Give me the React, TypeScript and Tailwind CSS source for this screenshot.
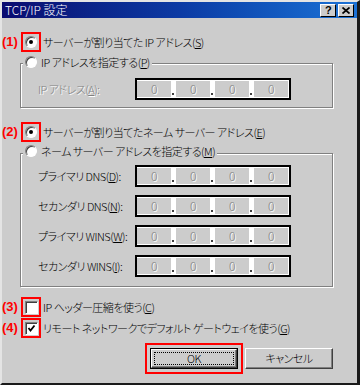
import React from 'react';

const JP = "font-['Noto_Sans_CJK_JP','Noto_Sans',sans-serif] [font-feature-settings:'palt'] font-light";
const TAG = "font-['Liberation_Sans',Arial,sans-serif] font-bold text-[13px] text-[#ff0000] leading-none tracking-normal";
const DISABLED = 'text-[#808080] [text-shadow:1px_1px_0_#ffffff]';

// accelerator key, underlined
const Acc: React.FC<{ k: string }> = ({ k }) => (
  <>
    (<span className="underline underline-offset-[1px]">{k}</span>)
  </>
);

const Radio: React.FC<{ checked?: boolean }> = ({ checked }) => (
  <span className="relative inline-block shrink-0 w-[12px] h-[12px] rounded-full bg-white border border-[#808080] border-b-white border-r-white shadow-[inset_1px_1px_0_#404040]">
    {checked && <span className="absolute left-[3px] top-[3px] w-[4px] h-[4px] rounded-full bg-black" />}
  </span>
);

const Checkbox: React.FC<{ checked?: boolean }> = ({ checked }) => (
  <span className="flex items-center justify-center shrink-0 w-[13px] h-[13px] bg-white border border-[#808080] border-b-white border-r-white shadow-[inset_1px_1px_0_#404040]">
    {checked && (
      <svg width="9" height="9" viewBox="0 0 9 9">
        <path d="M1.5 4 L3.5 6.5 L7.5 1.5" fill="none" stroke="#000" strokeWidth="1.8" />
      </svg>
    )}
  </span>
);

// numbered red annotation box around a control
const Marked: React.FC<{ n: number; children: React.ReactNode }> = ({ n, children }) => (
  <>
    <span className={`${TAG} w-[19px] -mt-[2px]`}>({n})</span>
    <span className="flex items-center justify-center w-[20px] h-[20px] border-2 border-[#ff0000]">{children}</span>
  </>
);

const IPBox: React.FC = () => (
  <div className="flex items-stretch w-[156px] h-[22px] border-2 border-black bg-white py-[1px] pr-[1px]">
    {[0, 1, 2, 3].map(i => (
      <React.Fragment key={i}>
        {i > 0 && (
          <div className="relative w-[5px]">
            <span className="absolute left-[1px] bottom-[2px] w-[2px] h-[2px] bg-[#404040]" />
          </div>
        )}
        <div className={`flex items-center justify-center w-[34px] bg-[#cccccc] text-[12px] leading-none ${DISABLED}`}>0</div>
      </React.Fragment>
    ))}
  </div>
);

const FieldRow: React.FC<{ label: React.ReactNode; disabled?: boolean }> = ({ label, disabled }) => (
  <div className="flex items-center h-[22px]">
    <span className={`w-[114px] pl-[17px] whitespace-nowrap ${disabled ? DISABLED : ''}`}>{label}</span>
    <IPBox />
  </div>
);

const GROUP = 'relative ml-[18px] w-[313px] border border-[#808080] shadow-[inset_1px_1px_0_#ffffff,1px_1px_0_#ffffff]';

export default function App() {
  return (
    <div className={`${JP} w-[360px] h-[385px] flex flex-col bg-[#cccccc] text-[11px] tracking-[-0.5px] leading-none text-black border-t-2 border-l-2 border-[#e4e4e4] border-r-[3px] border-r-[#1a1a1a] border-b-2 border-b-[#1a1a1a] overflow-hidden`}>
      {/* Title bar */}
      <div className="flex items-center h-[16px] pl-[3px] pr-[3px] bg-linear-to-r from-[#0a0a70] via-[#0c3aa4] to-[#1c72d6]">
        <span className="flex-1 text-white text-[12px] tracking-normal">TCP/IP 設定</span>
        <div className="flex gap-[2px]">
          <span className="flex items-center justify-center w-[16px] h-[13px] bg-[#cccccc] border border-white border-r-black border-b-black font-['Liberation_Sans',sans-serif] font-bold text-[11px] text-black">?</span>
          <span className="flex items-center justify-center w-[16px] h-[13px] bg-[#cccccc] border border-white border-r-black border-b-black">
            <svg width="8" height="7" viewBox="0 0 8 7">
              <path d="M0.5 0.5 L7.5 6.5 M7.5 0.5 L0.5 6.5" stroke="#000" strokeWidth="1.7" />
            </svg>
          </span>
        </div>
      </div>

      {/* (1) */}
      <div className="flex items-center h-[20px] mt-[14px]">
        <Marked n={1}><Radio checked /></Marked>
        <span className="ml-[2px] whitespace-nowrap">サーバーが割り当てた IP アドレス<Acc k="S" /></span>
      </div>

      <div className={`${GROUP} mt-[11px] h-[45px]`}>
        <div className="absolute -top-[9px] left-[2px] flex items-center gap-[4px] h-[14px] px-[2px] bg-[#cccccc]">
          <Radio />
          <span className="whitespace-nowrap">IP アドレスを指定する<Acc k="P" /></span>
        </div>
        <div className="mt-[14px]">
          <FieldRow disabled label={<>IP アドレス<Acc k="A" />:</>} />
        </div>
      </div>

      {/* (2) */}
      <div className="flex items-center h-[20px] mt-[14px]">
        <Marked n={2}><Radio checked /></Marked>
        <span className="ml-[2px] whitespace-nowrap">サーバーが割り当てたネーム サーバー アドレス<Acc k="E" /></span>
      </div>

      <div className={`${GROUP} mt-[11px] h-[134px]`}>
        <div className="absolute -top-[10px] left-[2px] flex items-center gap-[4px] h-[14px] px-[2px] bg-[#cccccc]">
          <Radio />
          <span className="whitespace-nowrap">ネーム サーバー アドレスを指定する<Acc k="M" /></span>
        </div>
        <div className="flex flex-col gap-[8px] mt-[11px]">
          <FieldRow label={<>プライマリ DNS<Acc k="D" />:</>} />
          <FieldRow label={<>セカンダリ DNS<Acc k="N" />:</>} />
          <FieldRow label={<>プライマリ WINS<Acc k="W" />:</>} />
          <FieldRow label={<>セカンダリ WINS<Acc k="I" />:</>} />
        </div>
      </div>

      {/* (3) (4) */}
      <div className="flex items-center h-[20px] mt-[10px]">
        <Marked n={3}><Checkbox /></Marked>
        <span className="ml-[2px] whitespace-nowrap">IP ヘッダー圧縮を使う<Acc k="C" /></span>
      </div>
      <div className="flex items-center h-[20px] mt-[1px]">
        <Marked n={4}><Checkbox checked /></Marked>
        <span className="ml-[2px] whitespace-nowrap">リモート ネットワークでデフォルト ゲートウェイを使う<Acc k="G" /></span>
      </div>

      {/* Buttons */}
      <div className="flex items-start justify-end gap-[2px] mt-[5px] pr-[24px]">
        <div className="border-2 border-[#ff0000] p-[3px]">
          <button className="flex w-[88px] h-[21px] border border-black bg-[#cccccc] p-0">
            <span className="flex flex-1 p-[1px] border-t border-l border-white border-r border-b border-r-[#404040] border-b-[#404040] shadow-[inset_-1px_-1px_0_#808080]">
              <span className="flex flex-1 items-center justify-center border border-dotted border-black m-[1px]">OK</span>
            </span>
          </button>
        </div>
        <button className="flex items-center justify-center mt-[5px] w-[88px] h-[21px] bg-[#cccccc] border border-white border-r-[#404040] border-b-[#404040] shadow-[inset_-1px_-1px_0_#808080] p-0">
          キャンセル
        </button>
      </div>
    </div>
  );
}
